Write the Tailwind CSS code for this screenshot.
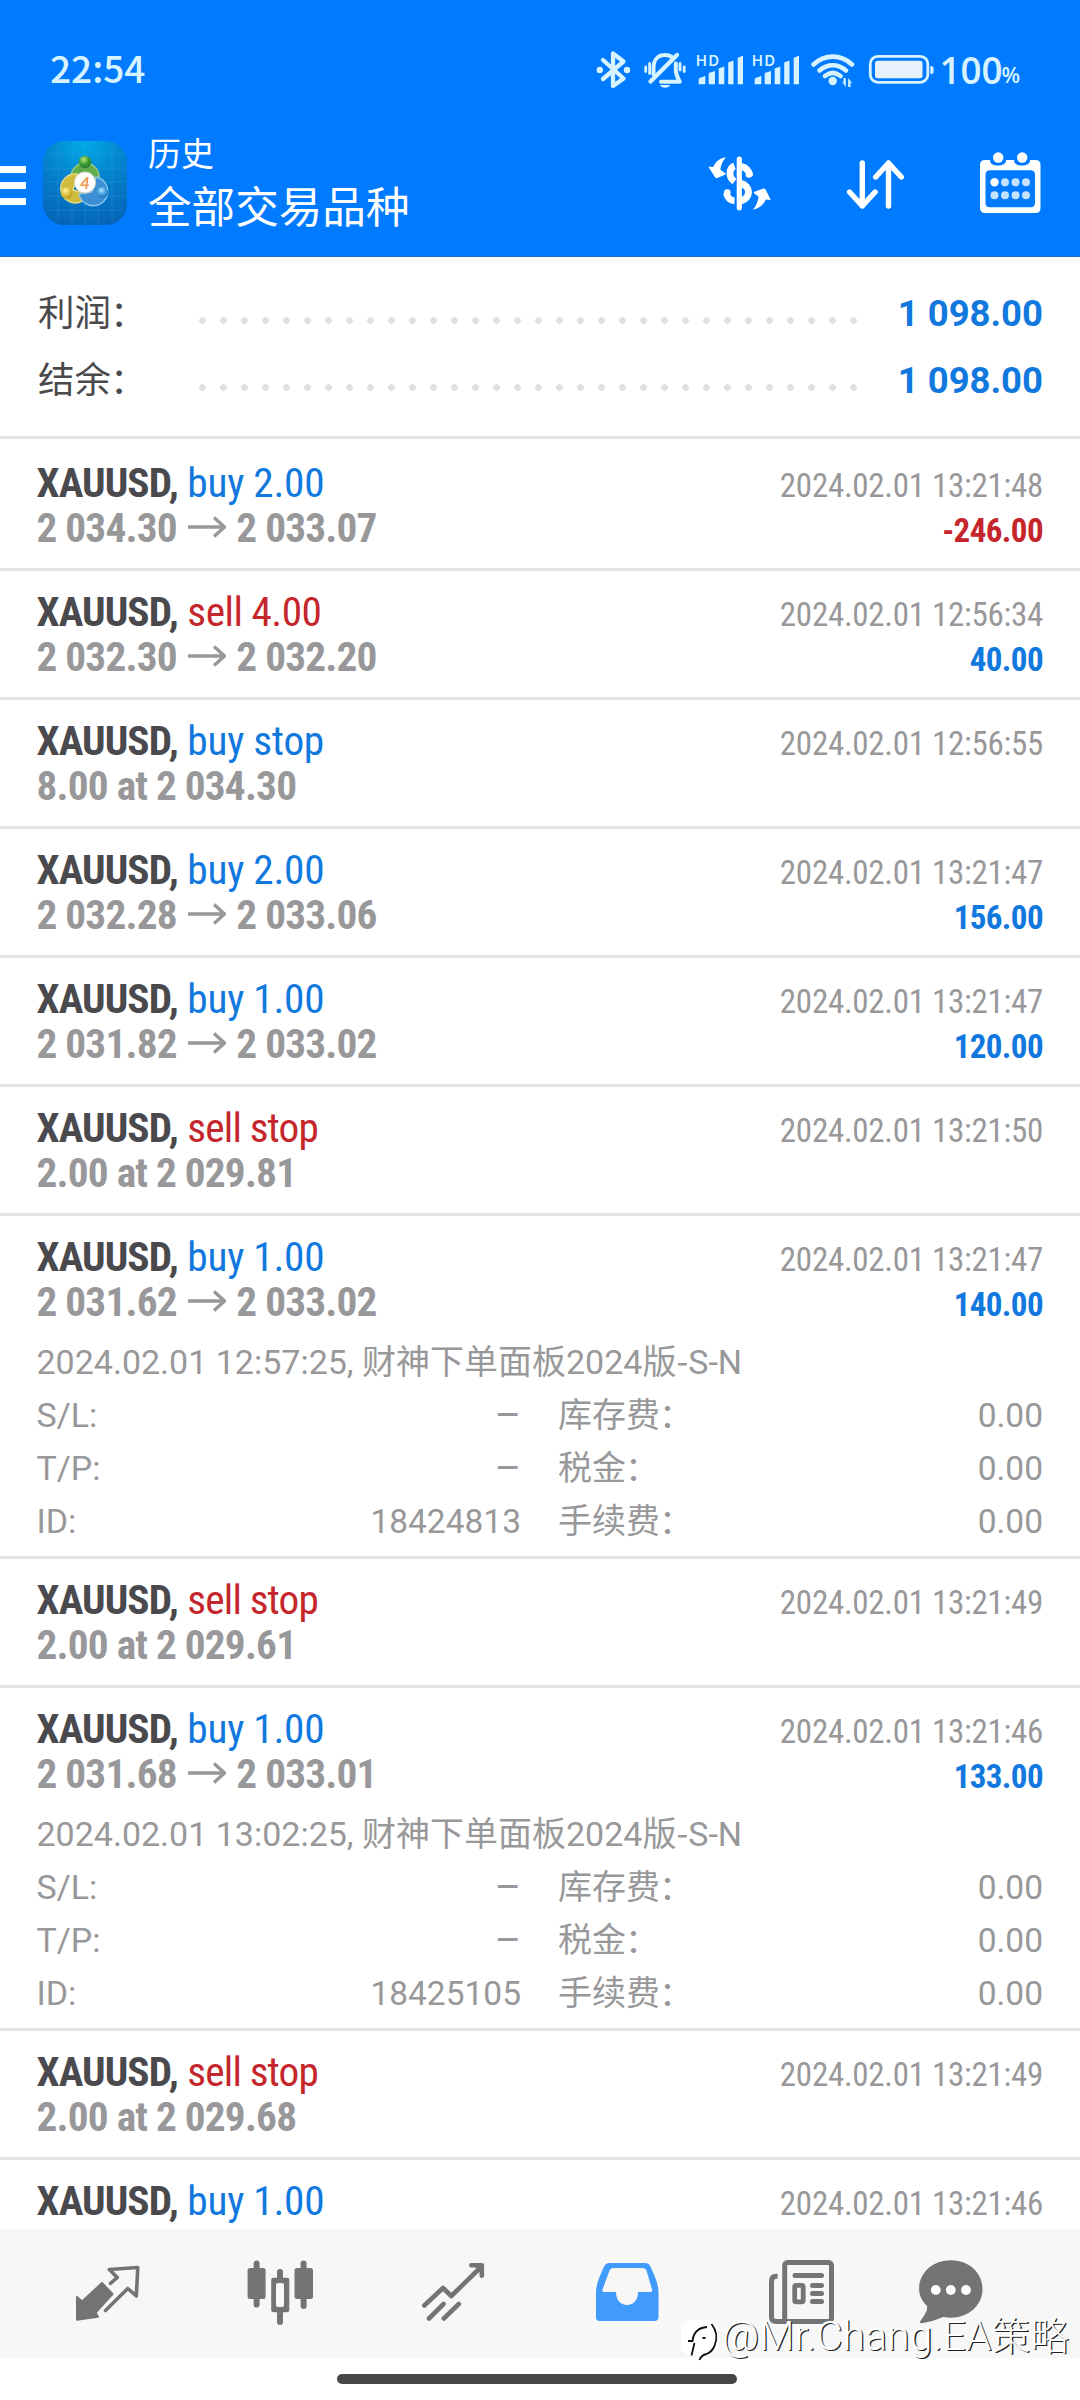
<!DOCTYPE html>
<html lang="zh-CN">
<head>
<meta charset="utf-8">
<title>历史</title>
<script src="https://cdn.jsdelivr.net/npm/@tailwindcss/browser@4"></script>
</head>
<body class="bg-white">
<div class="relative flex h-[2400px] w-[1080px] flex-col overflow-hidden bg-white font-[Roboto,'Noto_Sans_CJK_SC',sans-serif] text-[#98989a]">

  <header class="flex h-[257px] shrink-0 flex-col border-b border-[#1a6fc4] bg-[#007aff] text-white">
    <!-- status bar -->
    <div class="flex h-[138px] shrink-0 items-start pl-[50px] pt-[34px] font-['Noto_Sans_CJK_SC',sans-serif] font-medium text-[#d6f3ff]">
      <div class="mt-[11px] w-[544px] text-[37px] leading-[44px]">22:54</div>
      <svg class="shrink-0" width="466" height="72" viewBox="594 34 466 72" fill="none" stroke="#d6f3ff" stroke-linecap="round" stroke-linejoin="round">
        <path d="M603 60l20.5 18.500L613 86V53.500l10.500 8L603 79" stroke-width="4.300"/>
        <g fill="#d6f3ff" stroke="none"><circle cx="599.800" cy="70" r="3.200"/><circle cx="627" cy="70" r="3.200"/></g>
        <path d="M653.500 74.500V68c0-8 4.500-13 11.500-13 3 0 5 .8 7 2M675.800 63.500V70c0 5 1.500 7 4 11.700H661" stroke-width="4"/>
        <path d="M677 55L650.500 81.500" stroke-width="4.300"/>
        <path d="M645.700 67v4.500M649.600 63.500v10M680 63.500v6.500M684.200 67v4.500" stroke-width="2.800"/>
        <path d="M660 85h10c-1 3.500-9 3.500-10 0z" fill="#d6f3ff" stroke="none"/>
        <g fill="#d6f3ff" stroke="none">
          <text x="696" y="66" font-size="14.500" font-weight="600" font-family="Inter" textLength="23">HD</text>
          <path d="M698.700 79q0-1 6.600-3v8.300h-6.600zM708.700 73l6.300-2v13.300h-6.300zM718.700 68.500l5.600-2v17.800h-5.600zM728.200 62.500l5.300-2v23.800h-5.300zM737.700 58l5.300-2.500v28.800h-5.300z"/>
          <text x="752" y="66" font-size="14.500" font-weight="600" font-family="Inter" textLength="23">HD</text>
          <path d="M754.700 79q0-1 6.600-3v8.300h-6.600zM764.700 73l6.300-2v13.300h-6.300zM774.700 68.500l5.600-2v17.800h-5.600zM784.200 62.500l5.300-2v23.800h-5.300zM793.700 58l5.300-2.500v28.800h-5.300z"/>
          <circle cx="832.700" cy="81" r="4.200"/>
          <path d="M841 80.500l4.800 6.500v-9h-2.300v5zM853 84l-4.800-6v9h2.300v-5z"/>
        </g>
        <g stroke-width="4.600"><path d="M813.500 64.500c11-10.500 27.500-10.500 38.500 0"/><path d="M819.500 70.500c8-7 18.500-7 26.500 0"/><path d="M825 76c5-4 10.500-4 15.500 0"/></g>
        <rect x="870.300" y="56.300" width="57.500" height="26" rx="7.500" stroke-width="2.800"/>
        <rect x="875" y="60.800" width="47.500" height="17.400" rx="2.500" fill="#e6f1fc" stroke="none"/>
        <path d="M930.300 66q3.300 0 3.300 2v4q0 2-3.300 2z" fill="#d6f3ff" stroke="none"/>
        <text x="939.500" y="83.500" font-size="38" font-weight="600" font-family="Open Sans" fill="#d6f3ff" stroke="none" textLength="63" lengthAdjust="spacingAndGlyphs">100</text>
        <text x="1001.500" y="82.800" font-size="21.500" font-weight="600" font-family="Open Sans" fill="#d6f3ff" stroke="none">%</text>
      </svg>
    </div>
    <!-- title bar -->
    <div class="flex h-[92px]">
      <div class="mt-[28px] flex w-[26px] flex-col gap-[9px]">
        <i class="h-[7px] bg-white"></i><i class="h-[7px] bg-white"></i><i class="h-[7px] bg-white"></i>
      </div>
      <svg class="ml-[17px] mt-[3px] shrink-0" width="84" height="84" viewBox="0 0 84 84">
        <defs>
          <radialGradient id="bg" cx=".5" cy="0" r="1.050"><stop offset="0" stop-color="#00aae8"/><stop offset=".5" stop-color="#0580cc"/><stop offset="1" stop-color="#0563b6"/></radialGradient>
          <radialGradient id="gr" cx=".4" cy=".3" r=".8"><stop offset="0" stop-color="#b6e27a"/><stop offset=".5" stop-color="#3f9c35"/><stop offset="1" stop-color="#1d6f2a"/></radialGradient>
          <radialGradient id="ye" cx=".4" cy=".3" r=".8"><stop offset="0" stop-color="#fff2a0"/><stop offset=".5" stop-color="#dcc23a"/><stop offset="1" stop-color="#a88a1c"/></radialGradient>
          <radialGradient id="bl" cx=".4" cy=".3" r=".8"><stop offset="0" stop-color="#b5e4ff"/><stop offset=".5" stop-color="#3e9ee0"/><stop offset="1" stop-color="#1765ac"/></radialGradient>
        </defs>
        <rect width="84" height="84" rx="21" fill="url(#bg)"/>
        <path d="M15 3v78M29 1v82M42 0v84M55 1v82M69 3v78M3 13h78M1 28h82M0 41h84M1 55h82M3 69h78" stroke="#5cc4f0" stroke-opacity=".22" stroke-width=".8"/>
        <g stroke-width="1.300">
          <path d="M28 36a14 14 0 0 1 28 0v6l-6 2-8-8-10 7z" fill="#64ad4e" stroke="#a5cf7c"/>
          <path d="M34 33a14.500 14.500 0 1 0 7 26l-3-8-8-2z" fill="#d0bb3c" stroke="#eadf8c"/>
          <path d="M53 36a14.500 14.500 0 1 1-17 17l13-2z" fill="#3c8fd2" stroke="#8cc6ee"/>
        </g>
        <circle cx="42" cy="21" r="6.200" fill="url(#gr)"/>
        <circle cx="23.500" cy="52" r="5.800" fill="url(#ye)"/>
        <circle cx="59.500" cy="51.500" r="5.500" fill="url(#bl)"/>
        <circle cx="42" cy="41.500" r="10.600" fill="#fff" stroke="#d5d0b8" stroke-width=".8"/>
        <text x="42" y="47.800" text-anchor="middle" font-family="Lato" font-weight="700" font-size="17" font-style="italic" fill="#ef9a52">4</text>
      </svg>
      <div class="ml-[21px] flex w-[559px] flex-col">
        <div class="h-[47px] shrink-0 pt-[4px] text-[33px] leading-[26px]">历史</div>
        <div class="shrink-0 text-[43.6px] leading-[48px]">全部交易品种</div>
      </div>
      <svg class="mt-[12px] shrink-0" width="340" height="70" viewBox="707 150 340 70" fill="none" stroke="#fff" stroke-linecap="round" stroke-linejoin="round">
        <path d="M734.500 166c-5.500 2-6.500 11 0 15.500M750 176c-1-5.500-4.500-9-9-9.500M726.500 193c.5 4 3.500 7.500 8 7.800" stroke-width="6.800" stroke-linecap="butt"/>
        <path d="M741 183.500c10 2.500 10 14.500 0 17.500" stroke-width="7" stroke-linecap="butt"/>
        <circle cx="749" cy="174.500" r="3.300" fill="#fff" stroke="none"/><circle cx="727.300" cy="192.500" r="3.300" fill="#fff" stroke="none"/>
        <path d="M739.300 159v48.800" stroke-width="5.200"/>
        <g fill="#fff" stroke="none">
          <path d="M708.300 166.500l5 .5c2-5 6.500-9 12.700-9.700-3.500 4-5.300 8-5.600 12.500l5 3.500q.8 1-.5 1.500l-7.600 3.300q-1.500.5-2.500-1z"/>
          <path d="M770.800 200l-5-.5c-2 5-6.800 9.500-13 10.300 3.500-4 5.300-8.500 5.800-13l-4.500-3.500q-.8-1 .5-1.500l8-3q2-.6 3 .8z"/>
        </g>
        <path d="M862.300 163v43M849.500 192l12.800 14 12.800-14M888.500 206v-43M875.700 177l12.800-14 12.800 14" stroke-width="5.400"/>
        <path fill="#fff" stroke="none" fill-rule="evenodd" d="M985 160h5c0 4 3 5.500 8 5.500s8-1.500 8-5.500h8c0 4 3 5.500 8 5.500s8-1.500 8-5.500h5.500q5 0 5 5v43q0 5-5 5H985q-5 0-5-5v-43q0-5 5-5zM990 170.300q-4.500 0-4.500 4.500v28q0 4.500 4.500 4.500h40.500q4.500 0 4.500-4.500v-28q0-4.500-4.500-4.500z"/>
        <g stroke="none" fill="#c5e3ff"><circle cx="998.200" cy="157.500" r="5.200" fill="#fff"/><circle cx="1022.200" cy="157.500" r="5.200" fill="#fff"/>
        <circle cx="994.500" cy="182.300" r="4.200" fill="#fff"/><circle cx="1005" cy="182.300" r="4"/><circle cx="1015.500" cy="182.300" r="4"/><circle cx="1026" cy="182.300" r="4"/>
        <circle cx="994.500" cy="195.200" r="4"/><circle cx="1005" cy="195.200" r="4"/><circle cx="1015.500" cy="195.200" r="4"/><circle cx="1026" cy="195.200" r="4"/></g>
      </svg>
    </div>
  </header>

  <!-- totals -->
  <section class="flex h-[182px] shrink-0 flex-col border-b-3 border-[#e4e4e4] pl-[38px] pr-[37px] pt-[23px] text-[36.5px] leading-[67px] text-[#4a4a4d]">
    <div class="flex h-[67px]"><span class="w-[161px]">利润<span class="inline-block -translate-x-[1px] translate-y-[1px]">：</span></span><span class="mt-[37px] h-[7px] w-[672px] bg-[radial-gradient(circle_at_3.5px_3.5px,#e0e0e0_3px,transparent_3.7px)] bg-[length:21px_7px]"></span><span class="ml-auto text-[36.5px] font-bold text-[#1178de]">1 098.00</span></div>
    <div class="flex h-[67px]"><span class="w-[161px]">结余<span class="inline-block -translate-x-[1px] translate-y-[1px]">：</span></span><span class="mt-[37px] h-[7px] w-[672px] bg-[radial-gradient(circle_at_3.5px_3.5px,#e0e0e0_3px,transparent_3.7px)] bg-[length:21px_7px]"></span><span class="ml-auto text-[36.5px] font-bold text-[#1178de]">1 098.00</span></div>
  </section>

  <main id="list" class="h-[1790px] shrink-0 overflow-hidden pt-[3px]"></main>

  <!-- tab bar -->
  <nav class="flex h-[129px] shrink-0 items-start bg-[#f7f7f7] pt-[28px]">
    <svg class="ml-[73px] shrink-0" width="68" height="70" viewBox="73 2257 68 70" fill="none" stroke="#747474" stroke-linejoin="round" stroke-linecap="round"><path fill="#747474" stroke-width="2" d="M77 2297v22.800l21-3-2.500-4L112.500 2294 102 2283l-20 18.500z"/><path stroke-width="3.600" d="M105.500 2310.500L127.800 2288.500l8.500 7.500 1.500-28.500-28.500 2 8 8-6.800 5.800"/></svg>
    <svg class="ml-[104px] shrink-0" width="70" height="70" viewBox="245 2257 70 70" fill="#747474"><rect x="247.600" y="2268" width="18" height="31" rx="2.500"/><rect x="253.600" y="2260.500" width="6" height="47" rx="3"/><rect x="294.500" y="2268" width="18.500" height="31" rx="2.500"/><rect x="300.600" y="2260.500" width="6" height="48.500" rx="3"/><path fill-rule="evenodd" d="M273.500 2277.700h13.500q2.300 0 2.300 2.300v30q0 2.300-2.300 2.300h-13.500q-2.300 0-2.300-2.300v-30q0-2.300 2.300-2.300zM278 2283q-2 0-2 2v20q0 2 2 2h4q2 0 2-2v-20q0-2-2-2z"/><rect x="277" y="2269" width="6" height="11" rx="3"/><rect x="277" y="2310" width="6" height="15" rx="3"/></svg>
    <svg class="ml-[105px] shrink-0" width="68" height="70" viewBox="420 2257 68 70" fill="none" stroke="#747474" stroke-width="4.600" stroke-linecap="round" stroke-linejoin="round"><path d="M424.300 2305.500L443 2288l8.300 8L480 2268M471.300 2265.300h10.500v10.500M429 2318.500l14.500-14.500M443.800 2318.500l15-14.500"/><path d="M474 2265h8v8z" fill="#747474" stroke-width="1"/></svg>
    <svg class="ml-[106px] shrink-0" width="66" height="70" viewBox="594 2257 66 70"><path fill="#419bfd" fill-rule="evenodd" d="M609.500 2263h35.500q3.500 0 5.200 3l4 9q4.300 9.500 4.300 18v24q0 4-4 4h-54.500q-4 0-4-4v-24q0-8.500 4.300-18l4-9q1.700-3 5.200-3zM613 2268q-2.500 0-3.500 2.500l-7 19q-.8 2.500 1.500 2.500h12c0 8 4.500 13 11 13s11-5 11-13h12.500q2.300 0 1.500-2.500l-5.500-19q-.8-2.500-3.500-2.500z"/></svg>
    <svg class="ml-[107px] shrink-0" width="70" height="70" viewBox="767 2257 70 70" fill="none" stroke="#747474" stroke-width="5" stroke-linecap="round"><rect x="784.700" y="2262.500" width="46.800" height="59" rx="3"/><path stroke-linecap="butt" d="M777.600 2276.300h-1.500q-4.600 0-4.600 5V2317q0 4.500 4.600 4.500h10"/><path d="M795 2275.500h26.500M812.500 2285.500h9M812.500 2293.500h9M812.500 2301.500h9"/><rect x="794.700" y="2285.300" width="8.500" height="16.500" rx="1.500" stroke-width="4.800"/></svg>
    <svg class="ml-[80px] shrink-0" width="70" height="70" viewBox="917 2257 70 70"><path fill="#747474" d="M950.800 2260.300c17.800 0 31.700 12.200 31.700 28.700s-13.900 28.700-31.700 28.700q-4 0-7.500-.7-10 4.500-21.500 6.300-2.800 0-1.500-2l4-6q4-6 2.500-9.500c-4.800-4.800-7.700-10.500-7.700-16.800 0-16.500 13.900-28.700 31.700-28.700z"/><g fill="#fff"><circle cx="935.800" cy="2290" r="4.900"/><circle cx="950.800" cy="2290" r="4.900"/><circle cx="966" cy="2290" r="4.900"/></g></svg>
  </nav>
  <div class="flex h-[42px] shrink-0 justify-center bg-white pt-[16px]"><div class="mr-[6px] h-[10px] w-[400px] rounded-full bg-[#474747]"></div></div>

  <!-- watermark -->
  <div class="absolute left-[681px] top-[2311px] flex h-[50px] items-center whitespace-nowrap">
    <svg class="shrink-0" width="41" height="50" viewBox="681 2311 41 50" fill="none"><rect x="681" y="2320" width="37" height="35" rx="9" fill="#fff"/><path d="M688 2341h4.500q1.500-13 14.500-14M694.500 2343l-3 12.500M702.500 2338h3M711.500 2324q8 10 3 22-3 6.500-8 8-5 1-7 6" stroke="#111" stroke-width="1.800"/></svg>
    <span class="text-[40.5px] font-light leading-[50px] tracking-[0.3px] text-white [text-shadow:1.3px_1.3px_0.3px_#222]">@Mr.Chang.EA<span class="text-[38.5px]">策略</span></span>
  </div>
</div>

<script>
const rows = [
  ['buy', '2.00', '2 034.30', '2 033.07', '13:21:48', '-246.00'],
  ['sell', '4.00', '2 032.30', '2 032.20', '12:56:34', '40.00'],
  ['buy', 'stop', '8.00 at 2 034.30', '', '12:56:55', ''],
  ['buy', '2.00', '2 032.28', '2 033.06', '13:21:47', '156.00'],
  ['buy', '1.00', '2 031.82', '2 033.02', '13:21:47', '120.00'],
  ['sell', 'stop', '2.00 at 2 029.81', '', '13:21:50', ''],
  ['buy', '1.00', '2 031.62', '2 033.02', '13:21:47', '140.00', '12:57:25', '18424813'],
  ['sell', 'stop', '2.00 at 2 029.61', '', '13:21:49', ''],
  ['buy', '1.00', '2 031.68', '2 033.01', '13:21:46', '133.00', '13:02:25', '18425105'],
  ['sell', 'stop', '2.00 at 2 029.68', '', '13:21:49', ''],
  ['buy', '1.00', '', '', '13:21:46', ''],
];
const arrow = '<svg class="ml-[11px] mr-[10.5px] inline-block align-[4px]" width="38" height="22" viewBox="0 0 38 22" fill="none" stroke="#98989a" stroke-width="3.400"><path d="M0 11h36M26 1.500L36.500 11 26 20.500"/></svg>';
const line = (a, b, c) => `<div class="flex h-[53px]"><span class="w-[160px]">${a}</span><span class="w-[324.5px] text-right ${b === '–' ? 'text-[40px]' : 'text-[33.5px]'}">${b}</span><span class="ml-[37px]">${c}<span class="inline-block -translate-x-[1px] translate-y-[1px]">：</span></span><span class="ml-auto text-[33.5px]">0.00</span></div>`;
const tone = {
  buy: 'text-[#1178de] tracking-[-0.25px]',
  sell: 'text-[#c4262b] tracking-[-0.5px]',
  'sell stop': 'text-[#c4262b] tracking-[-0.85px]',
};
document.getElementById('list').innerHTML = rows.map(([side, size, from, to, time, profit, open, id]) => `
  <article class="border-b-3 border-[#e4e4e4] pl-[36.5px] pr-[37px] pt-[18px] ${open ? 'h-[343px]' : 'h-[129px]'}">
    <div class="flex justify-between font-['Roboto_Condensed',Roboto,sans-serif] [font-stretch:75%]">
      <div class="pt-[0.5px] text-[41.25px] leading-[45px]">
        <div><b class="text-[#4a4a4e] tracking-[-0.9px]">XAUUSD,</b> <span class="${tone[side + ' ' + size] || tone[side]}">${side} ${size}</span></div>
        <div class="font-bold tracking-[-0.78px]">${from}${to ? arrow + to : ''}</div>
      </div>
      <div class="pt-[3px] text-right text-[33px] leading-[45px]">
        <div class="tracking-[-0.28px]">2024.02.01 ${time}</div>
        <div class="font-bold tracking-[-0.6px] ${profit[0] === '-' ? 'text-[#c4262b]' : 'text-[#1178de]'}">${profit}</div>
      </div>
    </div>
    ${open ? `<div class="mt-[6px] text-[34px] leading-[53px]">
      <div class="h-[56px]">2024.02.01 ${open}, 财神下单面板2024版<span class="font-['Noto_Sans_CJK_SC']">-</span>S-N</div>
      ${line('S/L:', '–', '库存费')}${line('T/P:', '–', '税金')}${line('ID:', id, '手续费')}
    </div>` : ''}
  </article>`).join('');
</script>
</body>
</html>
